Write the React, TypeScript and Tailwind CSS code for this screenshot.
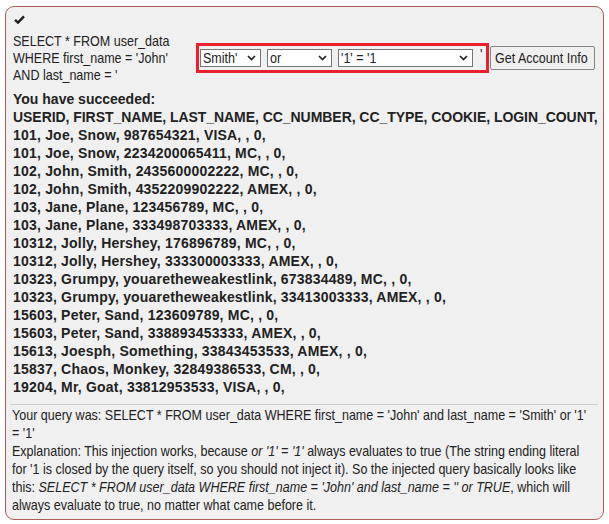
import React from "react";

const header = "USERID, FIRST_NAME, LAST_NAME, CC_NUMBER, CC_TYPE, COOKIE, LOGIN_COUNT,";

const rows = [
  "101, Joe, Snow, 987654321, VISA, , 0,",
  "101, Joe, Snow, 2234200065411, MC, , 0,",
  "102, John, Smith, 2435600002222, MC, , 0,",
  "102, John, Smith, 4352209902222, AMEX, , 0,",
  "103, Jane, Plane, 123456789, MC, , 0,",
  "103, Jane, Plane, 333498703333, AMEX, , 0,",
  "10312, Jolly, Hershey, 176896789, MC, , 0,",
  "10312, Jolly, Hershey, 333300003333, AMEX, , 0,",
  "10323, Grumpy, youaretheweakestlink, 673834489, MC, , 0,",
  "10323, Grumpy, youaretheweakestlink, 33413003333, AMEX, , 0,",
  "15603, Peter, Sand, 123609789, MC, , 0,",
  "15603, Peter, Sand, 338893453333, AMEX, , 0,",
  "15613, Joesph, Something, 33843453533, AMEX, , 0,",
  "15837, Chaos, Monkey, 32849386533, CM, , 0,",
  "19204, Mr, Goat, 33812953533, VISA, , 0,",
];

// the regular text in the screenshot is a condensed face
const Narrow = ({ children }: { children: React.ReactNode }) => (
  <span className="inline-block origin-left scale-x-[0.835] whitespace-nowrap">{children}</span>
);

const Select = ({ value, width }: { value: string; width: string }) => (
  <div
    className={`flex items-center justify-between h-[18px] border border-[#767676] bg-white pl-[2px] pr-[4px] overflow-hidden ${width}`}
  >
    <span className="leading-[16px]">
      <Narrow>{value}</Narrow>
    </span>
    <svg width="9" height="6" viewBox="0 0 9 6" className="shrink-0">
      <path d="M1 1 L4.5 4.5 L8 1" fill="none" stroke="#222" strokeWidth="1.7" />
    </svg>
  </div>
);

const App = () => {
  return (
    <div className="bg-white w-[609px] h-[524px] pt-[6px] pl-[5px] font-['Liberation_Sans',Arial,sans-serif] text-[#222]">
      <div className="w-[599px] h-[514px] bg-[#f0f0f0] border border-[#b05b5b] rounded-[9px] pl-[7px] pr-[5px] pt-[8px] overflow-hidden">
        <svg width="11" height="9" viewBox="0 0 11 9" className="block ml-[1px]">
          <path d="M1 4.8 L4 7.6 L10 1.3" fill="none" stroke="#1f1f1f" strokeWidth="2.4" />
        </svg>
        <div className="flex items-center mt-[8px] text-[15px]">
          <div className="w-[183px] leading-[17px]">
            <Narrow>SELECT * FROM user_data</Narrow>
            <br />
            <Narrow>WHERE first_name = 'John'</Narrow>
            <br />
            <Narrow>AND last_name = '</Narrow>
          </div>
          <div className="flex items-center border-[3px] border-[#e8202a] h-[30px] w-[293px] pl-[1px] gap-[6px]">
            <Select value="Smith'" width="w-[61px]" />
            <Select value="or" width="w-[65px]" />
            <Select value="'1' = '1" width="w-[135px]" />
            <span className="leading-none mb-[8px] ml-[1px]">
              <Narrow>'</Narrow>
            </span>
          </div>
          <button className="ml-[1px] h-[24px] w-[105px] border border-[#858585] bg-[#efefef] rounded-[2px] pl-[4px] text-left leading-none">
            <Narrow>Get Account Info</Narrow>
          </button>
        </div>
        <div className="mt-[7px] font-bold text-[14px] leading-[18px]">
          <div>You have succeeded:</div>
          <div className="whitespace-nowrap tracking-[-0.05px]">{header}</div>
          {rows.map((r, i) => (
            <div key={i} className="whitespace-nowrap tracking-[0.2px]">
              {r}
            </div>
          ))}
        </div>
        <hr className="border-t border-[#c9c9c9] mt-[8px] -ml-[3px]" />
        <div className="mt-[1px] -ml-[1px] text-[15px] leading-[18px]">
          <div className="w-[700px] origin-left scale-x-[0.835]">
            <p>
              Your query was: SELECT * FROM user_data WHERE first_name = 'John' and last_name = 'Smith' or '1' = '1'
            </p>
            <p>
              Explanation: This injection works, because <i>or '1' = '1'</i> always evaluates to true (The
              string ending literal for '1 is closed by the query itself, so you should not inject it). So the
              injected query basically looks like this:{" "}
              <i>SELECT * FROM user_data WHERE first_name = 'John' and last_name = '' or TRUE</i>, which will
              always evaluate to true, no matter what came before it.
            </p>
          </div>
        </div>
      </div>
    </div>
  );
};

export default App;
